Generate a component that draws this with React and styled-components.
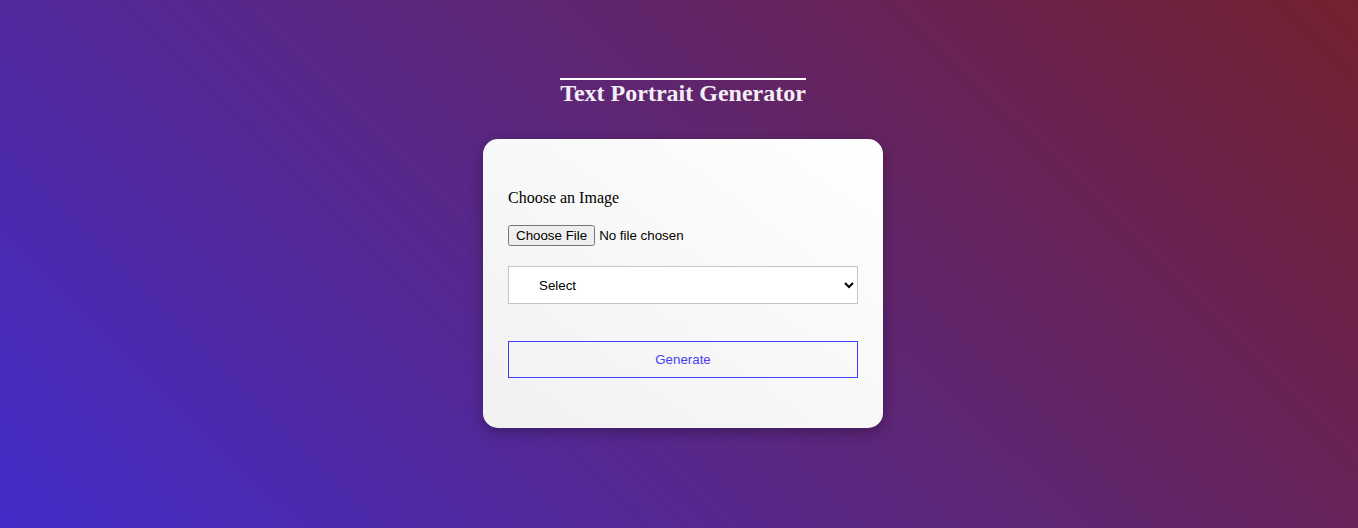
import React from "react";
import styled, { createGlobalStyle } from "styled-components";

const GlobalStyle = createGlobalStyle`
  html, body {
    margin: 0;
    padding: 0;
    overflow: hidden;
  }
  body {
    font-family: "Liberation Serif", "Times New Roman", serif;
    background: linear-gradient(45deg, #432cc9, #74202e);
    min-height: 100vh;
  }
`;

const Page = styled.main`
  min-height: 100vh;
  display: flex;
  flex-direction: column;
  align-items: center;
  padding: 78px 0 0 8px;
  box-sizing: border-box;
`;

const Title = styled.h1`
  margin: 0 0 32px;
  font-size: 24px;
  font-weight: bold;
  color: #f4eef6;
  border-top: 2px solid #fff;
`;

const Card = styled.section`
  width: 400px;
  box-sizing: border-box;
  padding: 50px 25px 50px;
  border-radius: 15px;
  background: linear-gradient(to top right, #f1f1f1, #ffffff);
  box-shadow: 0 4px 14px rgba(0, 0, 0, 0.3);
  display: flex;
  flex-direction: column;
`;

const Label = styled.label`
  font-size: 16px;
  color: #000;
  margin-bottom: 18px;
`;

const FileInput = styled.input`
  font: 13.33px "Liberation Sans", Arial, sans-serif;
  margin: 0 0 20px;
`;

const Select = styled.select`
  height: 38px;
  width: 100%;
  padding-left: 26px;
  border: 1px solid #c4c4c4;
  background: #fff;
  font: 13.33px "Liberation Sans", Arial, sans-serif;
  color: #000;
  margin-bottom: 37px;
`;

const Button = styled.button`
  height: 37px;
  width: 100%;
  background: transparent;
  border: 1px solid #3f3fff;
  color: #4b3cf5;
  font: 13.33px "Liberation Sans", Arial, sans-serif;
  cursor: pointer;
`;

export default function App() {
  return (
    <>
      <GlobalStyle />
      <Page>
        <Title>Text Portrait Generator</Title>
        <Card>
          <Label htmlFor="img">Choose an Image</Label>
          <FileInput id="img" type="file" accept="image/*" />
          <Select defaultValue="">
            <option value="">Select</option>
            <option value="small">Small</option>
            <option value="medium">Medium</option>
            <option value="large">Large</option>
          </Select>
          <Button>Generate</Button>
        </Card>
      </Page>
    </>
  );
}
